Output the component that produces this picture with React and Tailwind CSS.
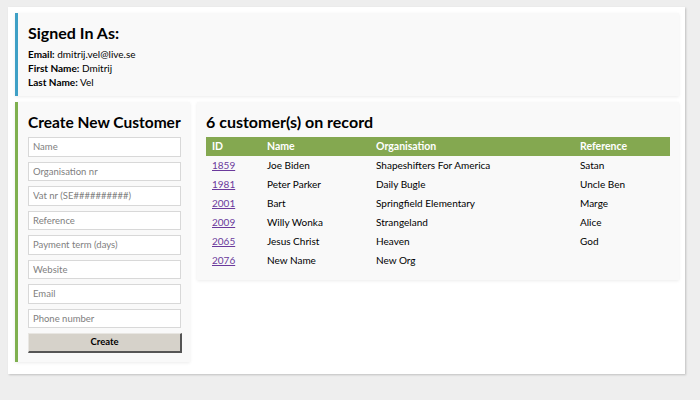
export default function App() {
  const rows = [
    ["1859", "Joe Biden", "Shapeshifters For America", "Satan"],
    ["1981", "Peter Parker", "Daily Bugle", "Uncle Ben"],
    ["2001", "Bart", "Springfield Elementary", "Marge"],
    ["2009", "Willy Wonka", "Strangeland", "Alice"],
    ["2065", "Jesus Christ", "Heaven", "God"],
    ["2076", "New Name", "New Org", ""],
  ];
  const fields = [
    "Name",
    "Organisation nr",
    "Vat nr (SE##########)",
    "Reference",
    "Payment term (days)",
    "Website",
    "Email",
    "Phone number",
  ];
  return (
    <div className="w-[700px] h-[400px] bg-[#eeeeee] pt-[7px] pl-[8px] font-['Lato',sans-serif] text-black">
      <div className="w-[677px] h-[367px] bg-white shadow-[1px_1px_2px_rgba(0,0,0,0.2)] pt-[6px] pl-[7px] pr-[6px]">
        <div className="h-[83px] bg-[#f9f9f9] border-l-[3px] border-[#3fa0c6] pl-[10px] pt-[9px] shadow-[0_1px_3px_rgba(0,0,0,0.08)]">
          <h1 className="text-[16px] font-bold leading-[22px]">Signed In As:</h1>
          <div className="mt-[3px] text-[10px] leading-[14px]">
            <div><span className="font-bold">Email:</span> dmitrij.vel@live.se</div>
            <div><span className="font-bold">First Name:</span> Dmitrij</div>
            <div><span className="font-bold">Last Name:</span> Vel</div>
          </div>
        </div>
        <div className="mt-[6px] flex gap-[7px] items-start">
          <div className="w-[175px] h-[260px] bg-[#f9f9f9] border-l-[3px] border-[#7fb04f] pl-[10px] pt-[9px] shadow-[0_1px_3px_rgba(0,0,0,0.08)]">
            <h2 className="text-[15.5px] font-bold leading-[22px] whitespace-nowrap">Create New Customer</h2>
            <div className="mt-[4px] flex flex-col gap-[5px] w-[153px]">
              {fields.map((f) => (
                <input
                  key={f}
                  placeholder={f}
                  className="h-[19.5px] bg-white border border-[#d8d8d8] px-[4px] text-[9.5px] placeholder:text-[#808080] outline-none"
                />
              ))}
              <button className="h-[20px] w-[154px] bg-[#d6d2ca] border-t border-l border-t-[#e8e6e2] border-l-[#e8e6e2] border-r-[2px] border-b-[2px] border-r-[#555] border-b-[#555] text-[9.5px] font-bold">
                Create
              </button>
            </div>
          </div>
          <div className="w-[482px] h-[178px] bg-[#f9f9f9] pl-[9px] pr-[9px] pt-[9px] shadow-[0_1px_3px_rgba(0,0,0,0.08)]">
            <h2 className="text-[16px] font-bold leading-[22px]">6 customer(s) on record</h2>
            <table className="mt-[4px] w-[464px] text-[10px] border-collapse">
              <thead>
                <tr className="bg-[#84a850] text-white h-[19px] text-left text-[10.5px]">
                  <th className="pl-[6px] w-[61px] font-bold">ID</th>
                  <th className="w-[109px] font-bold">Name</th>
                  <th className="w-[204px] font-bold">Organisation</th>
                  <th className="font-bold">Reference</th>
                </tr>
              </thead>
              <tbody>
                {rows.map((r) => (
                  <tr key={r[0]} className="h-[19px]">
                    <td className="pl-[6px]"><a href="#" className="text-[#6b3a9c] underline">{r[0]}</a></td>
                    <td>{r[1]}</td>
                    <td>{r[2]}</td>
                    <td>{r[3]}</td>
                  </tr>
                ))}
              </tbody>
            </table>
          </div>
        </div>
      </div>
    </div>
  );
}
